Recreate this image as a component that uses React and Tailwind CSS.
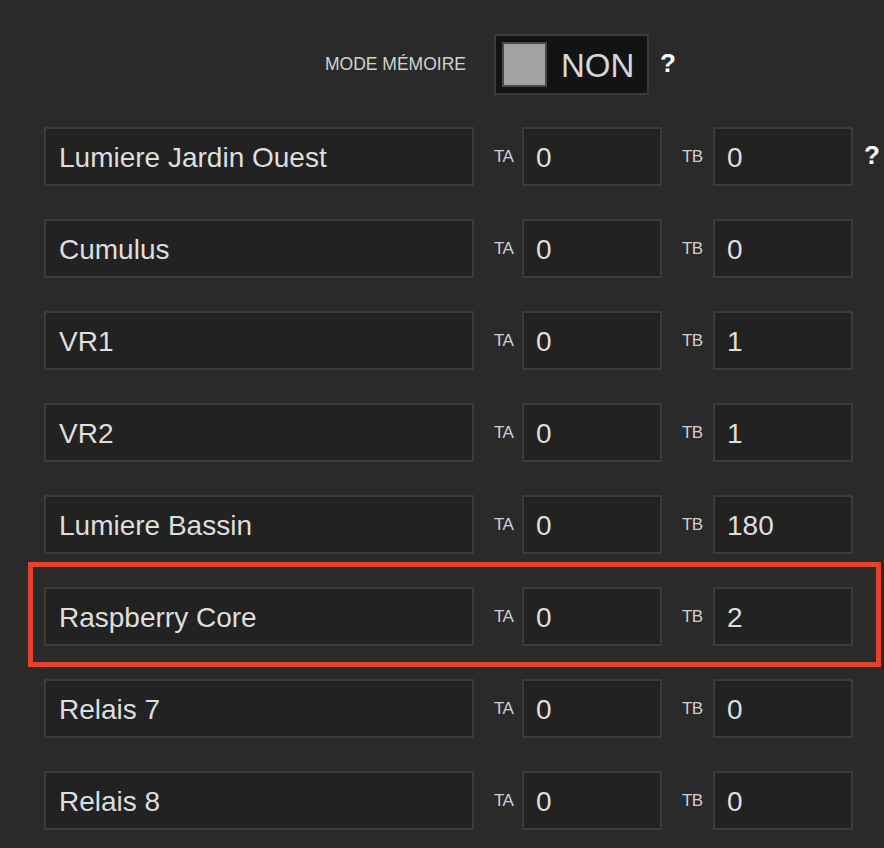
import React from 'react';

const relays = [
  { name: 'Lumiere Jardin Ouest', ta: '0', tb: '0', help: true },
  { name: 'Cumulus', ta: '0', tb: '0' },
  { name: 'VR1', ta: '0', tb: '1' },
  { name: 'VR2', ta: '0', tb: '1' },
  { name: 'Lumiere Bassin', ta: '0', tb: '180' },
  { name: 'Raspberry Core', ta: '0', tb: '2', marked: true },
  { name: 'Relais 7', ta: '0', tb: '0' },
  { name: 'Relais 8', ta: '0', tb: '0' },
];

const Field = ({ value, className }) => (
  <div
    className={`h-[59px] flex items-center pt-[2px] border-2 border-[#3b3b3b] bg-[#222222] text-[28px] text-[#dedede] ${className}`}
  >
    {value}
  </div>
);

const Help = () => (
  <span className="text-[26px] font-bold text-white leading-none">?</span>
);

const RelayRow = ({ relay }) => (
  <div className="relative flex items-center h-[59px]">
    {relay.marked && (
      <div className="absolute -left-[16px] -top-[25px] w-[853px] h-[105px] border-[5px] border-[#e8412a] pointer-events-none" />
    )}
    <Field value={relay.name} className="w-[430px] pl-[13px]" />
    <span className="ml-[20px] w-[22px] text-[17px] text-[#d0d0d0] tracking-[-0.6px]">TA</span>
    <Field value={relay.ta} className="ml-[6px] w-[140px] pl-[12px]" />
    <span className="ml-[20px] w-[24px] text-[17px] text-[#d0d0d0] tracking-[-0.6px]">TB</span>
    <Field value={relay.tb} className="ml-[7px] w-[140px] pl-[12px]" />
    {relay.help && <span className="ml-[11px]"><Help /></span>}
  </div>
);

export default function App() {
  return (
    <div
      className="min-h-[848px] w-[884px] bg-[#2a2a2a] overflow-hidden"
      style={{ fontFamily: '"Liberation Sans", Arial, sans-serif' }}
    >
      <div className="pl-[44px] pt-[34px]">
        <div className="flex items-center h-[61px] pl-[281px]">
          <span className="text-[17.5px] text-[#d2d2d2]">MODE MÉMOIRE</span>
          <div className="ml-[28px] w-[155px] h-[61px] flex items-center border-2 border-[#3a3a3a] bg-[#121315] pl-[6px]">
            <div className="w-[45px] h-[45px] bg-[#a2a2a2] border-2 border-[#4a4a4a]" />
            <span className="ml-[14px] pt-[2px] text-[33px] text-[#d6d6d6]">NON</span>
          </div>
          <span className="ml-[11px]"><Help /></span>
        </div>

        <div className="mt-[32px] flex flex-col gap-[33px]">
          {relays.map((r) => (
            <RelayRow key={r.name} relay={r} />
          ))}
        </div>
      </div>
    </div>
  );
}
